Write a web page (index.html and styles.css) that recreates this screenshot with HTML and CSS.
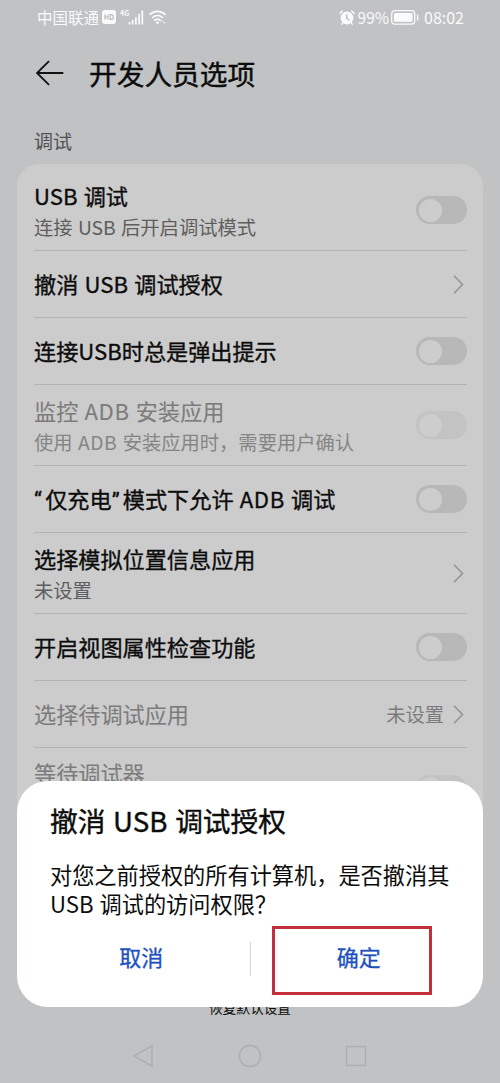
FILE: index.html
```html
<!DOCTYPE html>
<html lang="zh-CN">
<head>
<meta charset="utf-8">
<title>开发人员选项</title>
<link rel="stylesheet" href="styles.css">
</head>
<body>
<div class="phone">
  <header class="status">
    <div class="status-left">
      <span class="carrier">中国联通</span>
      <svg class="hd" width="14" height="14" viewBox="0 0 14 14"><rect x="0" y="0" width="14" height="14" rx="3" fill="#fafbfc"/><path d="M3 4.2v5.6M6 4.2v5.6M3 7h3M8.2 4.6v4.8h1a2 2 0 0 0 2-2v-.8a2 2 0 0 0-2-2z" fill="none" stroke="#b4b6b8" stroke-width="1.1"/></svg>
      <span class="net">4G</span>
      <svg class="signal" width="16" height="15" viewBox="0 0 16 15"><path d="M1.5 12v2.5M4.7 10v4.5M7.9 7.3v7.2M11.1 4v10.5M14.3 .5v14" stroke="#fafbfc" stroke-width="1.7"/></svg>
      <svg class="wifi" width="18" height="15" viewBox="0 0 18 15"><g fill="none" stroke="#fafbfc" stroke-width="1.7" stroke-linecap="round"><path d="M1 4.4a11 11 0 0 1 15 0M3.5 7.5a7.2 7.2 0 0 1 10 0M5.8 10.4a4 4 0 0 1 5.4 0"/></g><path d="M6.8 12.4a2.5 2.5 0 0 1 3.4 0L8.5 14.5z" fill="#fafbfc"/><path d="M12 11.8h1.8l-.9-1.6zM14.3 12h2.2l-1.1 2z" fill="#fafbfc"/></svg>
    </div>
    <div class="status-right">
      <svg class="alarm" width="16" height="15" viewBox="0 0 16 15"><circle cx="8" cy="8" r="6.4" fill="#fafbfc"/><path d="M1 3.2 3.3 1M15 3.2 12.7 1M4 12.5l-1.3 1.6M12 12.5l1.3 1.6" stroke="#fafbfc" stroke-width="1.5" stroke-linecap="round"/><path d="M7.7 4.2v4l2.8 2.2" fill="none" stroke="#b0b2b4" stroke-width="1.2"/></svg>
      <span class="percent">99%</span>
      <svg class="battery" width="28" height="15" viewBox="0 0 28 15"><rect x=".7" y=".7" width="23" height="13.4" rx="3" fill="none" stroke="#fafbfc" stroke-width="1.3"/><rect x="3" y="3" width="18.5" height="8.8" rx="1" fill="#fafbfc"/><path d="M26.6 4.5v6" stroke="#fafbfc" stroke-width="1.4"/></svg>
      <span class="clock">08:02</span>
    </div>
  </header>

  <div class="titlebar">
    <svg class="back" width="28" height="26" viewBox="0 0 28 26"><path d="M27.3 13H1M13 1.2 1 13l12 11.8" fill="none" stroke="#111" stroke-width="1.8"/></svg>
    <h1>开发人员选项</h1>
  </div>

  <h2 class="section">调试</h2>

  <main class="card">
    <div class="row tall"><div class="label"><b>USB 调试</b><small>连接 USB 后开启调试模式</small></div><i class="switch"></i></div>
    <div class="row"><div class="label"><b>撤消 USB 调试授权</b></div><svg class="chevron" width="11" height="19" viewBox="0 0 11 19"><path d="M1 .8 9.5 9.5 1 18.2"/></svg></div>
    <div class="row"><div class="label"><b>连接USB时总是弹出提示</b></div><i class="switch"></i></div>
    <div class="row tall disabled"><div class="label"><b>监控 <span class="adb">ADB</span> 安装应用</b><small>使用 <span class="adb">ADB</span> 安装应用时，需要用户确认</small></div><i class="switch"></i></div>
    <div class="row"><div class="label"><b><span class="quote">“</span>仅充电<span class="quote">”</span>模式下允许 <span class="adb">ADB</span> 调试</b></div><i class="switch"></i></div>
    <div class="row tall"><div class="label"><b>选择模拟位置信息应用</b><small>未设置</small></div><svg class="chevron" width="11" height="19" viewBox="0 0 11 19"><path d="M1 .8 9.5 9.5 1 18.2"/></svg></div>
    <div class="row"><div class="label"><b>开启视图属性检查功能</b></div><i class="switch"></i></div>
    <div class="row disabled"><div class="label"><b>选择待调试应用</b></div><span class="value">未设置</span><svg class="chevron" width="11" height="19" viewBox="0 0 11 19"><path d="M1 .8 9.5 9.5 1 18.2"/></svg></div>
    <div class="row tall last disabled"><div class="label"><b>等待调试器</b><small>&nbsp;</small></div><i class="switch"></i></div>
  </main>

  <div class="reset">恢复默认设置</div>

  <nav class="navbar">
    <svg width="22" height="24" viewBox="0 0 22 24"><path d="M20 1.8v20.4L2 12z"/></svg>
    <svg width="24" height="24" viewBox="0 0 24 24"><circle cx="12" cy="12" r="10.6"/></svg>
    <svg width="22" height="22" viewBox="0 0 22 22"><rect x="1.5" y="1.5" width="19" height="19" rx="1"/></svg>
  </nav>

  <section class="dialog">
    <h3>撤消 USB 调试授权</h3>
    <p>对您之前授权的所有计算机，是否撤消其<br>USB 调试的访问权限？</p>
    <div class="actions">
      <span class="action">取消</span>
      <span class="split"></span>
      <span class="action">确定</span>
    </div>
    <div class="highlight"></div>
  </section>
</div>
</body>
</html>
```
FILE: styles.css
```css
* { box-sizing: border-box; }

body {
  margin: 0;
  background: #c0c2c4;
  font-family: "Noto Sans CJK SC", sans-serif;
  color: #0c0c0c;
}

.phone {
  position: relative;
  width: 500px;
  height: 1083px;
  overflow: hidden;
  background: #c0c2c4;
}

.status {
  display: flex;
  justify-content: space-between;
  height: 34px;
  padding: 0 36px 0 37px;
  color: #fafbfc;
}

.status-left, .status-right { display: flex; align-items: center; }
.carrier { font-size: 15.5px; line-height: 34px; }
.hd { margin-left: 3px; }
.net { margin: -8px 0 0 4px; font-size: 7px; line-height: 8px; font-weight: 700; }
.signal { margin-left: -1px; }
.wifi { margin-left: 5px; }
.alarm { margin-right: 3px; }
.percent, .clock { font-size: 16px; line-height: 34px; }
.percent { font-size: 15.5px; }
.battery { margin-left: 2px; }
.clock { margin-left: 5px; }

.titlebar {
  display: flex;
  align-items: center;
  height: 78px;
  padding-left: 36px;
}

.titlebar h1 {
  margin: 0 0 0 25px;
  font-size: 27.7px;
  font-weight: 400;
  line-height: 40px;
  -webkit-text-stroke: 0.4px;
}

.section {
  height: 52px;
  margin: 0;
  padding: 14px 0 0 34px;
  font-size: 19px;
  font-weight: 400;
  line-height: 29px;
  color: #505153;
}

.card {
  width: 466px;
  margin-left: 17px;
  padding: 6px 16px 0 17px;
  background: #ccc;
  border-radius: 22px;
}

.row {
  display: flex;
  align-items: center;
  height: 67px;
  border-bottom: 1px solid #b3b3b3;
}

.row.tall { height: 81px; }
.row.last { border-bottom: 0; }

.label { flex: 1; padding-bottom: 2px; white-space: nowrap; }
.label b, .label small { display: block; }
.label b {
  font-size: 22.15px;
  font-weight: 400;
  line-height: 32px;
  word-spacing: 1.3px;
  -webkit-text-stroke: 0.35px;
}
.tall .label { padding: 0; }
.tall .label small { padding-top: 1px; }
.tall.last .label { padding: 0 0 2px; }
.label small { font-size: 19.3px; line-height: 30px; word-spacing: 1px; color: #5e5e5e; }

.adb { letter-spacing: 0.6px; }
.quote { font-family: Roboto, sans-serif; display: inline-block; width: 11.2px; line-height: 1; }

.disabled .label b { color: #7c7c7c; -webkit-text-stroke: 0.1px; }
.disabled .label small { color: #858585; }

.switch {
  width: 51px;
  height: 28px;
  padding: 2.5px;
  border-radius: 14px;
  background: #b8b8b8;
}

.switch::before {
  content: "";
  display: block;
  width: 23px;
  height: 23px;
  border-radius: 50%;
  background: #cdcdcd;
}

.disabled .switch { background: #c3c3c3; }

.chevron { margin-right: 3px; }
.chevron path { fill: none; stroke: #959595; stroke-width: 1.6; }
.value { margin-right: 9px; font-size: 19.3px; line-height: 30px; color: #7c7c7c; }

.reset {
  margin-top: 168px;
  text-align: center;
  font-size: 13.7px;
  line-height: 20px;
}

.navbar {
  position: absolute;
  bottom: 15px;
  left: 0;
  display: flex;
  align-items: center;
  justify-content: space-between;
  width: 500px;
  height: 24px;
  padding: 0 133px 0 132px;
}

.navbar svg { fill: none; stroke: #adafb1; stroke-width: 1.5; }

.dialog {
  position: absolute;
  top: 781px;
  left: 17px;
  width: 466px;
  height: 226px;
  padding: 19px 33px 0;
  border-radius: 31px;
  background: #fff;
  white-space: nowrap;
}

.dialog h3 {
  margin: 0;
  font-size: 27.7px;
  font-weight: 400;
  line-height: 40px;
  word-spacing: 1.5px;
  -webkit-text-stroke: 0.4px;
}
.dialog p { margin: 20px 0 0; font-size: 22.2px; line-height: 29px; word-spacing: 1px; }

.actions { display: flex; align-items: center; height: 40px; margin: 21px -17px 0; }
.action {
  flex: 1;
  padding-bottom: 6px;
  text-align: center;
  font-size: 22px;
  line-height: 32px;
  color: #1d52bd;
  -webkit-text-stroke: 0.3px;
}
.split { width: 1px; height: 34px; background: #d5d5d5; }

.highlight {
  position: absolute;
  top: 145px;
  left: 255px;
  width: 160px;
  height: 69px;
  border: 3px solid #c22f3b;
}
```
